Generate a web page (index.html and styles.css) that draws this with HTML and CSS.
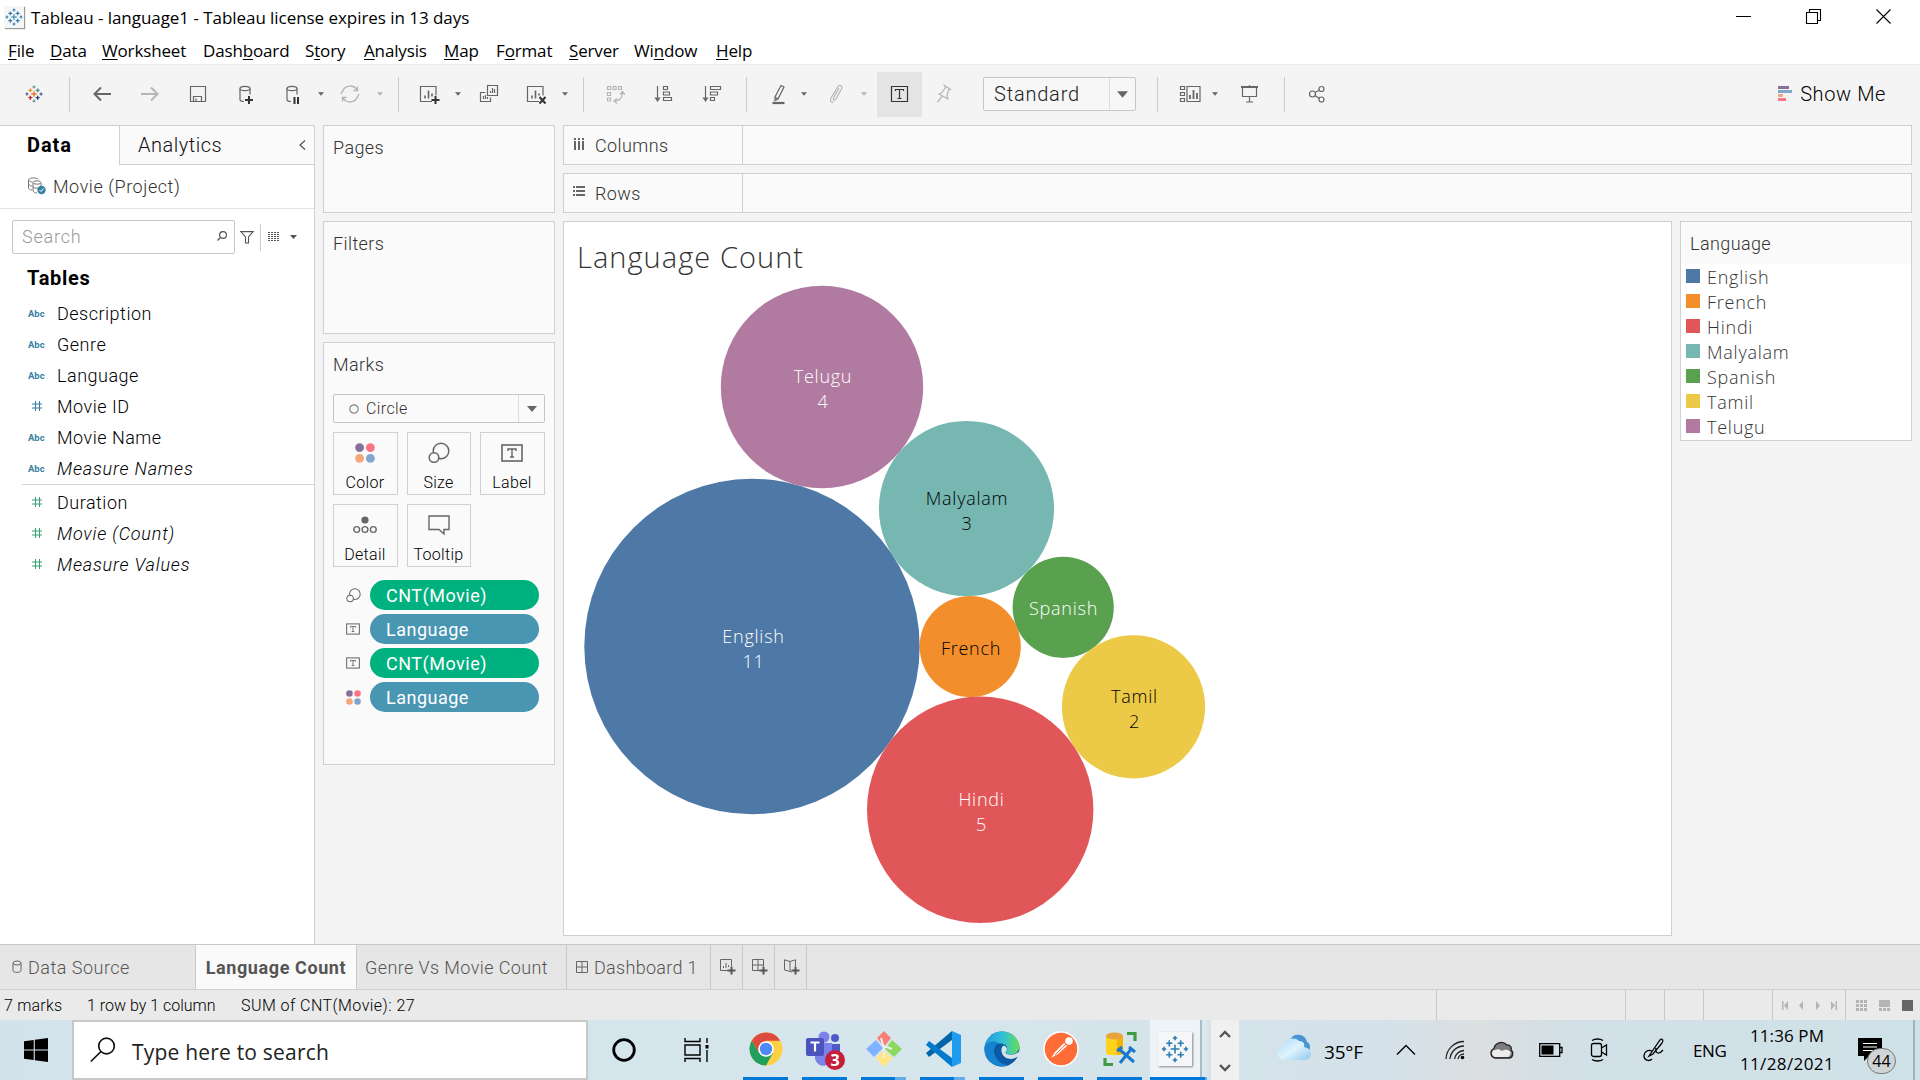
FILE: index.html
```html
<!DOCTYPE html>
<html lang="en">
<head>
<meta charset="utf-8">
<title>Tableau - language1</title>
<link rel="stylesheet" href="styles.css">
</head>
<body>
<svg class="defs" width="0" height="0">
  <symbol id="abc" viewBox="0 0 20 12"><text x="0" y="10" class="abc-text">Abc</text></symbol>
  <symbol id="hash" viewBox="0 0 12 12"><path d="M1 4h10M1 8h10M4.5 1v10M8.5 1v10" fill="none" stroke="currentColor" stroke-width="1.1"/></symbol>
  <symbol id="caret" viewBox="0 0 10 6"><path d="M0 0h10L5 6z" fill="currentColor"/></symbol>
  <symbol id="tbox" viewBox="0 0 22 18"><rect x="1" y="1" width="20" height="16" fill="none" stroke="currentColor" stroke-width="1.6"/><path d="M7 7V5h8v2M11 5v8M9 13h4" fill="none" stroke="currentColor" stroke-width="1.4"/></symbol>
  <symbol id="size" viewBox="0 0 22 22"><circle cx="13" cy="9" r="7.8" fill="none" stroke="currentColor" stroke-width="1.5"/><circle cx="6" cy="15.5" r="4.8" fill="#fafafa" stroke="currentColor" stroke-width="1.5"/></symbol>
  <symbol id="dots" viewBox="0 0 20 20"><circle cx="4.6" cy="4.6" r="4.4" fill="#86719b"/><circle cx="15.4" cy="4.6" r="4.4" fill="#fb7483"/><circle cx="4.6" cy="15.4" r="4.4" fill="#f4a77b"/><circle cx="15.4" cy="15.4" r="4.4" fill="#82a5cc"/></symbol>
  <symbol id="logo" viewBox="0 0 32 32"><path class="a" d="M16 11v10M11 16h10"/><path class="b" d="M9.5 6v7M6 9.500h7"/><path class="c" d="M22.500 6v7M19 9.500h7"/><path class="d" d="M9.500 19v7M6 22.500h7"/><path class="e" d="M22.500 19v7M19 22.500h7"/><path d="M16 1v5M13.500 3.500h5"/><path d="M16 26v5M13.500 28.500h5"/><path class="h" d="M3.500 13.500v5M1 16h5"/><path class="h" d="M28.500 13.500v5M26 16h5"/></symbol>
</svg>

<header class="titlebar">
  <svg class="app-icon" width="22" height="22"><use href="#logo" class="blue-logo"/></svg>
  <span class="window-title">Tableau - language1 - Tableau license expires in 13 days</span>
  <div class="window-buttons">
    <svg width="15" height="15"><path d="M0 7.500h15" stroke="#000"/></svg>
    <svg width="15" height="15"><path d="M.5 3.500h11v11h-11zM3.500 3.500v-3h11v11h-3" fill="none" stroke="#000" stroke-width="1.100"/></svg>
    <svg width="15" height="15"><path d="M.5.5l14 14M14.500.5l-14 14" stroke="#000" stroke-width="1.100"/></svg>
  </div>
</header>

<nav class="menubar">
  <span><u>F</u>ile</span><span><u>D</u>ata</span><span><u>W</u>orksheet</span><span>Dash<u>b</u>oard</span><span>S<u>t</u>ory</span><span><u>A</u>nalysis</span><span><u>M</u>ap</span><span>F<u>o</u>rmat</span><span><u>S</u>erver</span><span>Wi<u>n</u>dow</span><span><u>H</u>elp</span>
</nav>

<div class="toolbar">
  <svg class="ic color-logo" viewBox="0 0 24 24"><use href="#logo" x="3" y="3" width="18" height="18"/></svg>
  <i class="sep"></i>
  <svg class="ic" viewBox="0 0 24 24"><path d="M21 12H5M11 5.500L4.500 12l6.500 6.500" stroke-width="2"/></svg>
  <svg class="ic dim" viewBox="0 0 24 24"><path d="M3 12h16M13 5.500l6.500 6.500-6.500 6.500" stroke-width="2"/></svg>
  <svg class="ic" viewBox="0 0 24 24"><path d="M4.500 4.500h15v15h-15zM7.500 19.500v-5h8v5M10 19v-2.500"/></svg>
  <svg class="ic" viewBox="0 0 24 24"><path d="M7 6.500v11c0 1.300 2 2 4 2M17 6.500v6"/><ellipse cx="12" cy="6.500" rx="5" ry="2.200"/><path class="dark" d="M16 14v8M12 18h8" stroke-width="2"/></svg>
  <svg class="ic" viewBox="0 0 24 24"><path d="M7 6.500v11c0 1.300 2 2 4 2M17 6.500v6"/><ellipse cx="12" cy="6.500" rx="5" ry="2.200"/><path class="dark" d="M14.500 15v7M18 15v7" stroke-width="2"/></svg>
  <svg class="crt"><use href="#caret"/></svg>
  <svg class="ic dim" viewBox="0 0 24 24"><path d="M4.500 9.500a8 8 0 0 1 14.500-1.500M19.500 14.500a8 8 0 0 1-14.500 1.500M15.500 8.500h4v-4M8.500 15.500h-4v4M3 12l1.500-3M21 12l-1.500 3" stroke-width="1.400"/></svg>
  <svg class="crt dim"><use href="#caret"/></svg>
  <i class="sep"></i>
  <svg class="ic" viewBox="0 0 24 24"><path d="M15 19.500H3.500v-15h15.500v9"/><path d="M8 16.500v-3M11.500 16.500v-8M15 14.500v-3" stroke-width="1.600"/><path class="dark" d="M18.500 14v8M14.500 18h8" stroke-width="2"/></svg>
  <svg class="crt"><use href="#caret"/></svg>
  <svg class="ic" viewBox="0 0 24 24"><path d="M10.500 3.500h10v10h-10zM8.500 10.500h-5v9h10v-4M13.500 11v-2M15.500 11v-5M17.500 11v-4M6.500 17v-3M8.500 17v-4M10.500 17v-2"/></svg>
  <svg class="ic" viewBox="0 0 24 24"><path d="M15 19.500H3.500v-15h15.500v9"/><path d="M8 16.500v-3M11.500 16.500v-8M15 13.500v-2" stroke-width="1.600"/><path class="dark" d="M15.500 15l6 6.500M21.500 15l-6 6.500" stroke-width="2"/></svg>
  <svg class="crt"><use href="#caret"/></svg>
  <i class="sep"></i>
  <svg class="ic dim" viewBox="0 0 24 24"><path d="M4.500 4.500h3v3h-3zM10 4.500h3v3h-3zM15.500 4.500h3v3h-3zM4.500 10.500h3v3h-3zM4.500 16h3v3h-3zM19.500 10c0 6-3 9-8 9M17 12.500l2.500-3 2.500 3M14 16.500l-3 2.500 3 2.500"/></svg>
  <svg class="ic" viewBox="0 0 24 24"><path d="M5.500 4v14M3.500 16l2 3 2-3zM11.500 4.500h4v3h-4zM11.500 10h6v3h-6zM11.500 15.500h8v3h-8z"/></svg>
  <svg class="ic" viewBox="0 0 24 24"><path d="M5.500 4v14M3.500 16l2 3 2-3zM10.500 4.500h10v3h-10zM10.500 10h7v3h-7zM10.500 15.500h4v3h-4z"/></svg>
  <i class="sep"></i>
  <svg class="ic" viewBox="0 0 24 24"><path d="M15 3.500l3 1.500-6 12-3 1.500v-3.500zM9 15l3 2"/><path d="M6.500 21h12" stroke-width="2.200"/></svg>
  <svg class="crt"><use href="#caret"/></svg>
  <svg class="ic dim" viewBox="0 0 24 24"><path d="M15 6l-5.500 10c-1 2 1 3 2 1.500l6-10.500c1.500-3-2-5-3.700-2.300L7 16c-1.500 3 .5 5 2.500 4"/></svg>
  <svg class="crt dim"><use href="#caret"/></svg>
  <span class="tool-active"><svg viewBox="0 0 24 24" width="24" height="24"><path d="M3.500 4.500h16v15h-16zM7.500 9V7.500h8V9M11.500 7.500v9M9.500 16.500h4"/></svg></span>
  <svg class="ic dim" viewBox="0 0 24 24"><path d="M12.500 3.500l6 4-2 .5-1.500 6 1 3-9-5 3-1.500 3.500-5zM10 14.500L5.500 20"/></svg>
  <div class="fit-select"><span>Standard</span><b><svg width="11" height="7"><use href="#caret"/></svg></b></div>
  <i class="sep"></i>
  <svg class="ic" viewBox="0 0 24 24"><path d="M2.500 4.500h4v3h-4zM2.500 10.500h4v3h-4zM2.500 16.500h4v3h-4zM9 4.500h13v15H9z"/><path d="M12 17v-4M15.500 17V8M19 17v-6" stroke-width="1.800"/></svg>
  <svg class="crt"><use href="#caret"/></svg>
  <svg class="ic" viewBox="0 0 24 24"><path d="M4 5h17" stroke-width="2"/><path d="M5.500 5v9.500h14V5M12.500 3v2M12.500 14.500v5M9 20h7"/></svg>
  <i class="sep"></i>
  <svg class="ic" viewBox="0 0 24 24"><circle cx="7.500" cy="12" r="3"/><circle cx="16.500" cy="7" r="2.500"/><circle cx="16.500" cy="17.500" r="2.500"/><path d="M10 10.500l4.500-2.500M10 13.500l4.500 3"/></svg>
  <div class="showme"><svg width="14" height="16"><path fill="#86719b" d="M0 0h11v3H0z"/><path fill="#82a5cc" d="M0 4h14v3H0z"/><path fill="#f4a77b" d="M0 8h5v3H0z"/><path fill="#fb7483" d="M0 12h8v3H0z"/></svg><span>Show Me</span></div>
</div>

<main class="work">
  <aside class="data-pane">
    <div class="pane-tabs"><div class="tab-data">Data</div><div class="tab-analytics"><span>Analytics</span><svg width="7" height="10"><path d="M6 .5L1 5l5 4.500" fill="none" stroke="#555" stroke-width="1.300"/></svg></div></div>
    <div class="source">
      <svg width="18" height="18"><path d="M4 13c-2 0-3.500-1-3.500-2V3C.5 1 6 0 10 2M.5 3c1 2 3 2 4 2M.5 7c1 1.500 2 2 4 2M5 6v8c1 1.500 2 2 4 2M13 6v3" fill="none" stroke="#777"/><ellipse cx="9" cy="5.500" rx="4" ry="1.700" fill="none" stroke="#777"/><path d="M5 10c1 1.200 3 1.500 5 1" fill="none" stroke="#777"/><circle cx="13.500" cy="13" r="4.200" fill="#377fa3"/><path d="M11.500 13l1.500 1.500 2.500-3" fill="none" stroke="#fff"/></svg>
      <span>Movie (Project)</span>
    </div>
    <div class="search-row">
      <div class="field"><span>Search</span><svg width="10" height="10"><circle cx="6" cy="4" r="3.400" fill="none" stroke="#555" stroke-width="1.200"/><path d="M3.500 6.500L.5 9.500" stroke="#555" stroke-width="1.300"/></svg></div>
      <svg class="funnel" width="14" height="13"><path d="M.8.6h12.400L8.500 6v6h-3V6z" fill="none" stroke="#555" stroke-width="1.100"/></svg>
      <i class="vline"></i>
      <svg class="listic" width="12" height="10"><path d="M0 .5h12M0 2.500h12M0 4.500h12M0 6.500h12M0 8.500h12" stroke="#555" stroke-dasharray="2 1"/></svg>
      <svg class="search-caret" width="7" height="4"><path d="M0 0h7L3.500 4z" fill="#555"/></svg>
    </div>
    <h2>Tables</h2>
    <ul class="fields dims">
      <li><svg><use href="#abc"/></svg>Description</li>
      <li><svg><use href="#abc"/></svg>Genre</li>
      <li><svg><use href="#abc"/></svg>Language</li>
      <li><svg><use href="#hash"/></svg>Movie ID</li>
      <li><svg><use href="#abc"/></svg>Movie Name</li>
      <li class="it"><svg><use href="#abc"/></svg>Measure Names</li>
    </ul>
    <ul class="fields meas">
      <li><svg><use href="#hash"/></svg>Duration</li>
      <li class="it"><svg><use href="#hash"/></svg>Movie (Count)</li>
      <li class="it"><svg><use href="#hash"/></svg>Measure Values</li>
    </ul>
  </aside>

  <section class="cards">
    <div class="card pages">Pages</div>
    <div class="card filters">Filters</div>
    <div class="card marks">
      <div>Marks</div>
      <div class="mark-type"><svg width="10" height="10"><circle cx="5" cy="5" r="4.200" fill="none" stroke="#888" stroke-width="1.200"/></svg><span>Circle</span><b><svg width="10" height="6"><use href="#caret"/></svg></b></div>
      <div class="mark-buttons">
        <div><svg width="20" height="20"><use href="#dots"/></svg>Color</div>
        <div><svg width="22" height="22"><use href="#size"/></svg>Size</div>
        <div><svg width="22" height="18"><use href="#tbox"/></svg>Label</div>
        <div><svg width="24" height="18"><circle cx="12" cy="4" r="3.600" fill="#666"/><g fill="none" stroke="#666" stroke-width="1.400"><circle cx="3.700" cy="13.500" r="2.900"/><circle cx="12" cy="13.500" r="2.900"/><circle cx="20.300" cy="13.500" r="2.900"/></g></svg>Detail</div>
        <div><svg width="22" height="20"><path d="M1 1h20v13.500h-5V19l-5-4.500H1z" fill="none" stroke="#666" stroke-width="1.400"/></svg>Tooltip</div>
      </div>
      <div class="pills">
        <div><svg width="15" height="15"><use href="#size"/></svg><span class="green">CNT(Movie)</span></div>
        <div><svg width="14" height="12"><use href="#tbox"/></svg><span class="blue">Language</span></div>
        <div><svg width="14" height="12"><use href="#tbox"/></svg><span class="green">CNT(Movie)</span></div>
        <div><svg width="15" height="15"><use href="#dots"/></svg><span class="blue">Language</span></div>
      </div>
    </div>
  </section>

  <section class="canvas">
    <div class="shelf"><div><svg width="12" height="12"><path d="M2 0v2M6 0v2M10 0v2M2 3v9M6 3v9M10 3v9" stroke="#666" stroke-width="2"/></svg>Columns</div></div>
    <div class="shelf"><div><svg width="12" height="12"><path d="M0 1h2M0 5h2M0 9h2M3 1h9M3 5h9M3 9h9" stroke="#666" stroke-width="2"/></svg>Rows</div></div>
    <div class="view-row">
      <div class="view">
        <h1>Language Count</h1>
        <svg class="bubbles" viewBox="564 282 1107 653" width="1107" height="653">
          <circle cx="752" cy="646.500" r="167.700" fill="#4e79a7"/>
          <circle cx="822" cy="387" r="101.200" fill="#b07aa1"/>
          <circle cx="966.500" cy="508.500" r="87.600" fill="#76b7b2"/>
          <circle cx="1063.200" cy="607.300" r="50.600" fill="#59a14f"/>
          <circle cx="970.200" cy="646.500" r="50.600" fill="#f28e2b"/>
          <circle cx="1133.500" cy="706.800" r="71.600" fill="#edc948"/>
          <circle cx="980.200" cy="809.800" r="113.200" fill="#e15759"/>
          <g class="lt"><text x="753.500" y="643">English</text><text x="753.500" y="668">11</text>
          <text x="823" y="383">Telugu</text><text x="823" y="408">4</text>
          <text x="1063.500" y="614.500">Spanish</text>
          <text x="981.500" y="806">Hindi</text><text x="981.500" y="831">5</text></g>
          <g class="dk"><text x="967" y="505">Malyalam</text><text x="967" y="530">3</text>
          <text x="971" y="655">French</text>
          <text x="1134.500" y="703">Tamil</text><text x="1134.500" y="728">2</text></g>
        </svg>
      </div>
      <div class="legend">
        <h3>Language</h3>
        <ul>
          <li><i class="c-english"></i>English</li>
          <li><i class="c-french"></i>French</li>
          <li><i class="c-hindi"></i>Hindi</li>
          <li><i class="c-malyalam"></i>Malyalam</li>
          <li><i class="c-spanish"></i>Spanish</li>
          <li><i class="c-tamil"></i>Tamil</li>
          <li><i class="c-telugu"></i>Telugu</li>
        </ul>
      </div>
    </div>
  </section>
</main>

<div class="sheet-tabs">
  <div class="t-source"><svg width="10" height="14"><path d="M1 3v7.500c0 2.500 8 2.500 8 0V3" fill="none" stroke="#666"/><ellipse cx="5" cy="3" rx="4" ry="2" fill="none" stroke="#666"/></svg>Data Source</div>
  <div class="t-active">Language Count</div>
  <div class="t-genre">Genre Vs Movie Count</div>
  <div class="t-dash"><svg width="12" height="12"><path d="M.5.5h11v11H.5zM6 .5v11M.5 6h11" fill="none" stroke="#666"/></svg>Dashboard 1</div>
  <div class="t-new"><svg width="16" height="16"><path d="M8 11.500H.5V.5h11V7M3.500 9V7M6 9V4M8.500 8V6" fill="none" stroke="#666"/><path d="M11.500 7.500v8M7.500 11.500h8" stroke="#555" stroke-width="2"/></svg></div>
  <div class="t-new"><svg width="16" height="16"><path d="M8 11.500H.5V.5h11V7M6 .5v11M.5 6h11" fill="none" stroke="#666"/><path d="M11.500 7.500v8M7.500 11.500h8" stroke="#555" stroke-width="2"/></svg></div>
  <div class="t-new"><svg width="16" height="16"><path d="M8 13L.5 11V.8L6 2.500 11.500.8V7M6 2.500V12" fill="none" stroke="#666"/><path d="M11.500 7.500v8M7.500 11.500h8" stroke="#555" stroke-width="2"/></svg></div>
</div>

<div class="status">
  <span class="s1">7 marks</span><span class="s2">1 row by 1 column</span><span class="s3">SUM of CNT(Movie): 27</span>
  <i class="g1"></i><i class="g2"></i><i class="g2"></i><i class="g3"></i>
  <div class="pager"><svg width="56" height="9"><g fill="#b4b4b4"><path d="M0 0h1.500v9H0zM6 0v9L2 4.500zM21 0v9l-4-4.500zM34 0v9l4-4.500zM49 0v9l4-4.500zM53.500 0H55v9h-1.500z"/></g></svg></div>
  <div class="modes"><svg width="58" height="11"><path d="M0 0h3v3H0zM4 0h3v3H4zM8 0h3v3H8zM0 4h3v3H0zM4 4h3v3H4zM8 4h3v3H8zM0 8h3v3H0zM4 8h3v3H4zM8 8h3v3H8zM23 0h11v7H23zM23 8h3v3h-3zM27 8h3v3h-3zM31 8h3v3h-3z" fill="#b4b4b4"/><path d="M46 0h11v11H46z" fill="#666"/></svg></div>
</div>

<footer class="taskbar">
  <div class="start"><svg width="24" height="24"><path d="M0 3.300l9.700-1.300v9.500H0zM10.800 1.800L24 0v11.500H10.800zM0 12.500h9.700V22L0 20.700zM10.800 12.500H24V24l-13.200-1.800z"/></svg></div>
  <div class="find"><svg width="26" height="26"><circle cx="16.500" cy="9" r="7.800" fill="none" stroke="#111" stroke-width="1.700"/><path d="M11 14.500L.8 24.500" stroke="#111" stroke-width="1.700"/></svg><span>Type here to search</span></div>
  <div class="cortana"><svg width="24" height="24"><circle cx="12" cy="12" r="10.300" fill="none" stroke="#000" stroke-width="2.800"/></svg></div>
  <div class="taskview"><svg width="26" height="24"><path d="M1 0v3.500h15V0M1 24v-3.500h15V24M1 7h15v10H1zM23 0v5M23 12v12" fill="none" stroke="#000" stroke-width="1.400"/><path d="M21.500 7h3v3.500h-3z"/></svg></div>
  <div class="apps">
    <div class="app"><svg width="34" height="34" viewBox="0 0 34 34"><circle cx="17" cy="17" r="16.500" fill="#fdd043"/><path d="M2.700 8.800A16.500 16.500 0 0 1 31.300 8.800H17L9.900 21z" fill="#dd4b3e"/><path d="M2.700 8.800A16.500 16.500 0 0 0 17 33.500L24 21l-14 0z" fill="#1fa05c"/><circle cx="17" cy="17" r="7.800" fill="#fff"/><circle cx="17" cy="17" r="6.200" fill="#4c8bf5"/></svg></div>
    <div class="app"><svg width="42" height="38" viewBox="0 0 42 38"><circle cx="20" cy="7" r="5.500" fill="#7b83eb"/><circle cx="31" cy="8" r="4" fill="#5059c9"/><path d="M25 14h11v10a6 6 0 0 1-11 3z" fill="#5059c9"/><path d="M11 13h17v12a8.500 8.500 0 0 1-17 4z" fill="#7b83eb"/><rect x="2" y="8" width="18" height="18" rx="2" fill="#4b53bc"/><path d="M6.500 12.500h9M11 12.500v9" stroke="#fff" stroke-width="2.200"/><circle cx="31" cy="30" r="10" fill="#c4203c"/><text x="31" y="36" class="badge">3</text></svg></div>
    <div class="app two"><svg width="36" height="36" viewBox="0 0 36 36"><path d="M18 0l7 7-7 9-7-9z" fill="#f88078"/><path d="M10 9l7 8-9 9-8-8z" fill="#80b3ff"/><path d="M26 9l10 9-8 8-9-8z" fill="#8cd95f"/><path d="M18 19l8 8-8 9-8-9z" fill="#ffe680"/><path d="M15 7l3 11v9M18 15l8 3" fill="none" stroke="#eee" stroke-width="2"/></svg></div>
    <div class="app two"><svg width="36" height="36" viewBox="0 0 36 36"><path d="M27 0L1 22l3 4L27 9z" fill="#0065a9"/><path d="M27 36L1 14l3-4 23 17z" fill="#007acc"/><path d="M27 0l9 4v28l-9 4z" fill="#1f9cf0"/></svg></div>
    <div class="app"><svg width="36" height="36" viewBox="0 0 36 36"><defs><linearGradient id="eg"><stop offset="0" stop-color="#1b9de2"/><stop offset=".55" stop-color="#35c1d6"/><stop offset="1" stop-color="#66dd51"/></linearGradient></defs><circle cx="18" cy="18" r="17.500" fill="#0c59a4"/><path d="M.6 16C3 6 10 .5 18 .5 28 .5 35.500 8 35.500 15.500c0 5-4 8-9 8-4 0-6-2-4-4 2-3-1-7-6-7C9 12.500 3 13 .6 16z" fill="url(#eg)"/><path d="M.5 17c2-7 10-8 14-5-4 2-5 7-4 11 2 7 8 11 14 11-12 5-25-4-24-17z" fill="#1782cf"/><path d="M19.500 14.500c-3 2-3 9 2 12 4 2.500 9 1.500 12.500-1l2-2v-4c-3 4-8 4.500-11 4-4-.5-4-2-2.500-4 1-2 0-4-3-5z" fill="#d6e4ea"/></svg></div>
    <div class="app"><svg width="36" height="36" viewBox="0 0 36 36"><circle cx="18" cy="18" r="17" fill="#ff6c37" stroke="#fff" stroke-width="1.500"/><path d="M8 27l4-6 9-9 3 3-9 8z" fill="#fff"/><circle cx="26" cy="10" r="3.800" fill="#fff"/><path d="M12 24l11-11" stroke="#ff6c37"/></svg></div>
    <div class="app"><svg width="34" height="34" viewBox="0 0 34 34"><path d="M3 3v18c0 3 17 3 17 0V3z" fill="#ffd21c"/><path d="M14 5h6v17l-6 1z" fill="#f5b400"/><ellipse cx="11.500" cy="4" rx="8.500" ry="3.500" fill="#e8a33c"/><path d="M24 1.500h8V9M2 26v6.500h8" fill="none" stroke="#3f9c43" stroke-width="3.200"/><path d="M16 17l15 13M29 16L17 31M14 19l5-4M26 15l6 5" stroke="#1878cc" stroke-width="3"/></svg></div>
    <div class="app current"><svg width="34" height="34" class="blue-logo tile"><use href="#logo" x="3" y="2" width="28" height="30"/></svg></div>
  </div>
  <div class="scroller"><svg width="12" height="7"><path d="M1 6l5-5 5 5" fill="none" stroke="#555" stroke-width="2.400"/></svg><svg width="12" height="7"><path d="M1 1l5 5 5-5" fill="none" stroke="#555" stroke-width="2.400"/></svg></div>
  <div class="tray">
    <svg width="33" height="24" class="w-icon"><defs><linearGradient id="cl" x2="1" y2="1"><stop offset="0" stop-color="#a9dcf8"/><stop offset=".5" stop-color="#dff3fd"/><stop offset="1" stop-color="#8fc8ee"/></linearGradient></defs><path d="M12 3a9 9 0 0 1 17 2c4 1 4 8 0 11z" fill="#4a94d4"/><path d="M7 23a7 7 0 0 1-1-14C7 2 16-1 21 4c5 0 6 4 5 6 5 1 7 4 7 7s-3 6-6 6z" fill="url(#cl)"/></svg>
    <span class="temp">35°F</span>
    <svg width="20" height="12"><path d="M1 10.500l9-9 9 9" fill="none" stroke="#000" stroke-width="1.300"/></svg>
    <svg width="20" height="20"><g fill="none" stroke="#222" stroke-width="1.300"><path d="M1 19A18 18 0 0 1 19 1.500M5 19A14 14 0 0 1 19 6M9.500 19A10 10 0 0 1 19 10.500"/><path d="M13 19a6 6 0 0 1 6-5"/></g><circle cx="17.500" cy="17.500" r="1.800"/></svg>
    <svg width="25" height="18"><path d="M6 17a5 5 0 0 1-1-9.500C6 2 13-1 18 4c4 0 5 3 4 5 3 2 2 8-2 8z" fill="#7c7c7c" stroke="#222" stroke-width="1.300"/><path d="M6 16c-4-1-4-7 0-7 3-2 6 0 7 1 4-3 11 0 8 4-1 2-2 2-3 2z" fill="#ececec"/></svg>
    <svg width="24" height="14"><path d="M.7.700h20v12.600H.7zM21 4.500h2v5h-2" fill="none" stroke="#000" stroke-width="1.300"/><path d="M2.500 2.500h12v9h-12z"/></svg>
    <svg width="18" height="24"><g fill="none" stroke="#000" stroke-width="1.300"><rect x="1.500" y="5.500" width="10" height="13" rx="2"/><path d="M11.500 10l5-3v10l-5-3M2 2.500c3-2 8-2 11 0M2 21.500c3 2 8 2 11 0"/></g></svg>
    <svg width="22" height="24"><path d="M8 15L17 2c2-2 4 0 2 3l-9 11-4 2zM9 13c-4-2-8 1-8 5s5 6 8 3M13 10c-1 4 2 8 7 2" fill="none" stroke="#000" stroke-width="1.300"/></svg>
    <span class="lang">ENG</span>
    <div class="clock"><span>11:36 PM</span><span>11/28/2021</span></div>
    <div class="notif"><svg width="24" height="24"><path d="M0 0h24v18H11l-5 5v-5H0z"/><path d="M5 5.500h14M5 9h14M5 12.500h10" stroke="#fff" stroke-width="1.200"/></svg><span>44</span></div>
    <i class="peek"></i>
  </div>
</footer>
</body>
</html>
```
FILE: styles.css
```css
* { box-sizing: border-box; }
body { margin: 0; width: 1920px; height: 1080px; overflow: hidden; background: #f4f4f4; color: #111; font-family: Roboto, "Open Sans", sans-serif; font-size: 18px; display: flex; flex-direction: column; }
ul, h1, h2, h3 { margin: 0; padding: 0; list-style: none; font-weight: 400; }
svg { display: block; flex: none; overflow: visible; }
.defs { display: none; }

/* window chrome */
.titlebar { height: 36px; flex: none; background: #fff; display: flex; align-items: center; padding: 0 29px 0 4px; }
.app-icon { width: 20px; height: 22px; padding: 1px; background: #f6f6f6; box-shadow: 1px 1px 1px #999; margin-top: -2px; }
.blue-logo { stroke: #2b7bb0; stroke-width: 2; }
.window-title { margin: -2px 0 0 7px; font: 17px "Open Sans", sans-serif; color: #000; letter-spacing: -.05px; }
.window-buttons { margin-left: auto; display: flex; gap: 55px; margin-top: -3px; }
.menubar { height: 28px; flex: none; background: #fff; display: grid; grid-template-columns: 42px 52px 101px 102px 59px 80px 52px 73px 65px 82px auto; align-items: center; padding-left: 8px; font: 17px "Open Sans", sans-serif; letter-spacing: -.15px; color: #000; }
.menubar u { text-underline-offset: 2px; text-decoration-thickness: 1px; }

/* toolbar */
.toolbar { height: 61px; flex: none; display: grid; align-items: center; padding: 0 0 2px 22px; border-top: 1px solid #ececec;
  grid-template-columns: 47px 21px 48px 48px 47px 47px 36px 22px 37px 23px 19px 36px 24px 47px 36px 23px 20px 49px 48px 46px 20px 33px 25px 35px 18px 55px 51px 174px 21px 32px 27px 47px 21px 50px 1fr; }
.toolbar > * { justify-self: start; }
.ic, .tool-active svg { width: 24px; height: 24px; fill: none; stroke: #666; stroke-width: 1.2; color: #666; }
.ic .dark { stroke: #333; }
.ic.dim { stroke: #b5b5b5; }
.crt { width: 6px; height: 4px; margin-left: 2px; color: #666; }
.crt.dim { color: #b5b5b5; }
.sep { width: 1px; height: 35px; background: #ccc; }
.tool-active { width: 45px; height: 45px; background: #e4e4e4; display: grid; place-items: center; }
.tool-active svg { stroke: #333; }
.color-logo { stroke: #7199a6; stroke-width: 2.5; --a: #e8762c; --b: #eb912c; --c: #5b879b; --d: #c72037; --e: #1f447e; --h: #5c6692; }
.a { stroke: var(--a, inherit); }
.b { stroke: var(--b, inherit); }
.c { stroke: var(--c, inherit); }
.d { stroke: var(--d, inherit); }
.e { stroke: var(--e, inherit); }
.h { stroke: var(--h, inherit); }
.fit-select { width: 153px; height: 34px; border: 1px solid #c6c6c6; border-radius: 2px; display: flex; align-items: center; background: #f7f7f7; font-size: 20px; font-weight: 300; color: #222; padding-left: 10px; letter-spacing: .8px; }
.fit-select b { margin-left: auto; width: 26px; align-self: stretch; border-left: 1px solid #dcdcdc; display: grid; place-items: center; color: #666; }
.toolbar > .showme { display: flex; gap: 8px; align-items: center; justify-self: end; margin-right: 34px; font-size: 20px; font-weight: 300; color: #000; letter-spacing: .6px; white-space: nowrap; }

/* columns */
.work { height: 819px; flex: none; display: flex; }
.data-pane { width: 315px; background: #fff; border-right: 1px solid #d0d0d0; border-top: 1px solid #d0d0d0; }
.pane-tabs { display: flex; height: 39px; font-size: 20px; line-height: 38px; }
.tab-data { width: 119px; padding-left: 27px; font-weight: 700; letter-spacing: .9px; color: #000; }
.tab-analytics { flex: 1; padding: 0 8px 0 18px; background: #fafafa; border-left: 1px solid #d0d0d0; border-bottom: 1px solid #d0d0d0; display: flex; align-items: center; justify-content: space-between; font-weight: 300; letter-spacing: .5px; }
.source { height: 44px; border-bottom: 1px solid #e2e2e2; display: flex; align-items: center; gap: 7px; padding: 0 0 1px 28px; color: #333; font-weight: 300; letter-spacing: .55px; }
.search-row { display: flex; align-items: center; height: 34px; margin: 11px 0 0 12px; }
.field { width: 223px; height: 34px; border: 1px solid #c6c6c6; border-radius: 2px; display: flex; align-items: center; justify-content: space-between; padding: 0 7px 2px 9px; color: #999; font-weight: 300; letter-spacing: .8px; }
.funnel { margin-left: 5px; }
.vline { width: 1px; height: 27px; background: #ccc; margin: 0 7px 0 6px; }
.search-caret { margin-left: 10px; }
.data-pane h2 { font-size: 20px; font-weight: 700; padding-left: 27px; height: 44px; line-height: 48px; letter-spacing: .7px; color: #000; }
.fields li { height: 31px; display: flex; align-items: center; padding: 0 0 1px 28px; font-weight: 300; color: #000; letter-spacing: .5px; }
.fields svg { width: 18px; height: 12px; margin-right: 11px; color: #377fa3; fill: #377fa3; }
.abc-text { font: bold 10.500px Roboto, sans-serif; letter-spacing: 0; }
.fields .it { font-style: italic; letter-spacing: .8px; }
.fields.meas svg { color: #3f9f77; }
.dims { height: 186px; }
.meas { margin-left: 22px; border-top: 1px solid #d6d6d6; padding-top: 2px; }
.fields.meas li { padding-left: 6px; }

.cards { width: 232px; margin-left: 8px; display: flex; flex-direction: column; gap: 8px; }
.card { border: 1px solid #d0d0d0; background: #fafafa; padding: 12px 9px; line-height: 20px; color: #333; font-weight: 300; letter-spacing: .4px; }
.pages { height: 88px; }
.filters { height: 113px; }
.marks { height: 423px; padding-top: 12px; }
.mark-type { height: 29px; border: 1px solid #c6c6c6; border-radius: 2px; margin-top: 19px; display: flex; align-items: center; padding-left: 15px; font-size: 16px; gap: 7px; }
.mark-type b { margin-left: auto; width: 26px; align-self: stretch; border-left: 1px solid #dcdcdc; display: grid; place-items: center; color: #666; }
.mark-buttons { display: grid; grid-template-columns: 65px 64px 65px; gap: 9px; margin-top: 9px; font-size: 16px; color: #000; letter-spacing: .3px; }
.mark-buttons > div { height: 63px; border: 1px solid #d0d0d0; display: flex; flex-direction: column; align-items: center; justify-content: flex-end; line-height: 20px; padding: 0 1px 1px 0; }
.mark-buttons svg { margin: auto; color: #666; }
.pills { margin-top: 13px; display: grid; gap: 4px; }
.pills > div { display: flex; height: 30px; align-items: center; justify-content: space-between; padding: 0 6px 0 13px; color: #666; }
.pills span { width: 169px; height: 30px; border-radius: 15px; color: #fff; font-weight: 400; line-height: 31px; padding-left: 16px; letter-spacing: .5px; }
.green { background: #00b180; }
.blue { background: #4996b2; }

.canvas { margin-left: 8px; width: 1349px; display: flex; flex-direction: column; gap: 8px; }
.shelf { height: 40px; border: 1px solid #d0d0d0; background: #fafafa; display: flex; }
.shelf > div { width: 179px; border-right: 1px solid #d0d0d0; display: flex; align-items: center; gap: 10px; padding: 0 0 0 9px; color: #333; font-weight: 300; letter-spacing: .4px; }
.shelf svg { margin-top: -2px; }
.view-row { display: flex; gap: 8px; align-items: flex-start; }
.view { width: 1109px; height: 715px; border: 1px solid #d0d0d0; background: #fff; }
.view h1 { height: 60px; padding: 13px 0 0 13px; font: 300 29px/44px "Open Sans", sans-serif; color: #333; letter-spacing: 1.05px; }
.bubbles text { font: 300 18px "Open Sans", sans-serif; text-anchor: middle; letter-spacing: .75px; }
.lt { fill: #fff; }
.dk { fill: #000; }
.legend { width: 232px; height: 220px; border: 1px solid #d0d0d0; background: #fff; }
.legend h3 { height: 42px; line-height: 43px; font-size: 18px; padding-left: 9px; background: #fafafa; font-weight: 300; color: #333; letter-spacing: .4px; }
.legend li { height: 25px; display: flex; align-items: center; gap: 7px; padding-left: 5px; font: 300 18px "Open Sans", sans-serif; color: #333; letter-spacing: .75px; }
.legend i { width: 14px; height: 14px; margin-top: -2px; }
.c-english { background: #4e79a7; }
.c-french { background: #f28e2b; }
.c-hindi { background: #e15759; }
.c-malyalam { background: #76b7b2; }
.c-spanish { background: #59a14f; }
.c-tamil { background: #edc948; }
.c-telugu { background: #b07aa1; }

/* sheet tabs and status */
.sheet-tabs { height: 46px; flex: none; background: #e6e6e6; border-top: 1px solid #c8c8c8; border-bottom: 1px solid #d0d0d0; display: flex; color: #555; font-size: 18px; font-weight: 300; }
.sheet-tabs > div { border-right: 1px solid #c8c8c8; display: flex; align-items: center; white-space: nowrap; }
.t-source { width: 196px; padding-left: 12px; gap: 6px; letter-spacing: .5px; }
.t-active { width: 161px; background: #fafafa; font-weight: 700; justify-content: center; letter-spacing: .6px; }
.t-genre { width: 210px; padding-left: 8px; letter-spacing: .4px; }
.t-dash { width: 144px; padding-left: 9px; gap: 6px; letter-spacing: .3px; }
.t-new { width: 32px; justify-content: center; }
.t-new svg { margin-left: 2px; }
.status { height: 30px; flex: none; background: #eaeaea; display: flex; align-items: center; font-size: 16px; padding-left: 4px; font-weight: 300; color: #000; }
.status > i, .pager, .modes { height: 30px; border-left: 1px solid #c8c8c8; display: flex; align-items: center; }
.s1 { width: 83px; letter-spacing: .2px; }
.s2 { width: 154px; }
.s3 { width: 1195px; letter-spacing: .45px; }
.g1 { width: 189px; }
.g2 { width: 39px; }
.g3 { width: 69px; }
.pager { width: 73px; padding-left: 9px; }
.modes { padding-left: 10px; }

/* taskbar */
.taskbar { height: 60px; flex: none; display: flex; align-items: center; background: linear-gradient(90deg, #d3e3ec, #d6e6ec 50%, #d4e1ea 72%, #dbdfe0 77%, #d2e0e7 82%, #cfe1e8); font-family: "Open Sans", sans-serif; color: #000; }
.start { width: 72px; padding-left: 24px; }
.find { width: 516px; height: 60px; background: #fff; border: 2px solid #c8c8c8; display: flex; align-items: center; padding-left: 16px; gap: 16px; font-size: 21px; letter-spacing: .2px; color: #222; }
.find span { margin-top: 3px; }
.cortana { width: 95px; padding-left: 24px; }
.taskview { width: 60px; padding-left: 1px; }
.apps { display: flex; gap: 14px; height: 60px; }
.app { width: 45px; border-bottom: 3px solid #0078d7; display: grid; place-items: center; padding-top: 1px; }
.two { border-image: linear-gradient(90deg, #0078d7 73%, #63ace5 73%) 3; }
.current { width: 57px; margin-left: -6px; background: linear-gradient(90deg, #edf3f6 50px, #a9bdc8 50px 52px, #dde8ee 52px); padding-right: 8px; border-image: linear-gradient(90deg, #0078d7 91%, #63ace5 91%) 3; }
.tile { background: #f4f6f7; box-shadow: 1px 1px 2px #888; stroke-width: 1.8; }
.badge { font: bold 16px "Open Sans", sans-serif; fill: #fff; text-anchor: middle; }
.scroller { width: 28px; height: 60px; margin-left: 4px; background: #f0f0f0; display: flex; flex-direction: column; align-items: center; justify-content: space-between; padding: 11px 0 9px; }
.tray { flex: 1; height: 60px; display: grid; align-items: center; padding-left: 39px; grid-template-columns: 46px 72px 49px 44px 50px 51px 53px 50px 44px 100px 66px 1fr; font-size: 17px; }
.w-icon { margin-top: -3px; }
.temp { font-size: 19px; letter-spacing: -.2px; margin-top: 4px; }
.lang { letter-spacing: -.4px; }
.clock { display: flex; flex-direction: column; align-items: center; line-height: 28px; letter-spacing: .4px; }
.clock span:first-child { letter-spacing: .1px; }
.notif { position: relative; justify-self: end; margin-right: 21px; }
.notif span { position: absolute; left: 9px; top: 10px; width: 29px; height: 26px; border: 1px solid #777; border-radius: 13px; background: #d0d4d7; line-height: 24px; text-align: center; font-size: 16px; }
.peek { width: 2px; height: 60px; background: #9fb4be; justify-self: end; margin-right: 5px; }
```
